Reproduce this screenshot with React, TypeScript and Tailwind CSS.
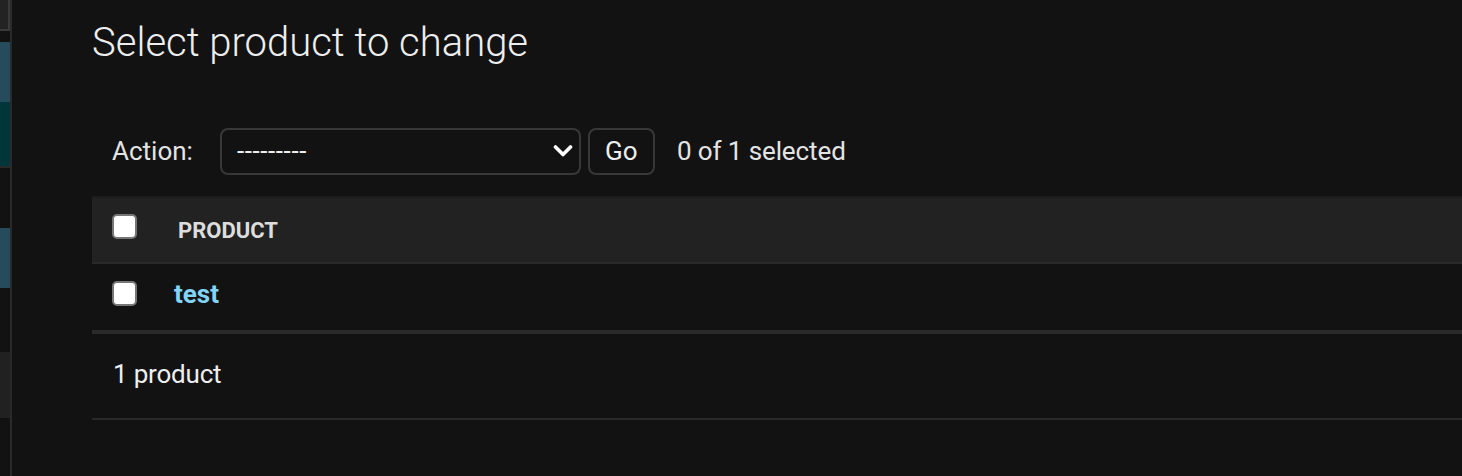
import React from 'react';

const Checkbox: React.FC<{ className?: string }> = ({ className = '' }) => (
  <span
    className={`block w-[25px] h-[25px] shrink-0 rounded-[5px] border-2 border-[#767676] bg-white ${className}`}
  />
);

const Sidebar: React.FC = () => (
  <div className="flex w-[12px] shrink-0 flex-col border-r-2 border-[#2a2a2a]">
    <div className="h-[31px] border-r-2 border-b-2 border-[#3a3a3a] bg-[#232323]" />
    <div className="h-[11px]" />
    <div className="h-[60px] bg-[#264b5d]" />
    <div className="h-[64px] bg-[#00363a]" />
    <div className="h-[2px] bg-[#2a2a2a]" />
    <div className="h-[60px]" />
    <div className="h-[60px] bg-[#264b5d]" />
    <div className="h-[64px]" />
    <div className="h-[66px] bg-[#212121]" />
    <div className="flex-1" />
  </div>
);

const App: React.FC = () => {
  return (
    <div className="flex h-[476px] w-[1462px] overflow-hidden bg-[#121212] font-['Roboto','Liberation_Sans',sans-serif] text-[#eeeeee]">
      <Sidebar />

      <main className="min-w-0 flex-1 pl-[80px] pt-[19px]">
        <h1 className="mb-[40px] text-[40px] leading-[48px] font-light text-[#eeeeee]">
          Select product to change
        </h1>

        {/* actions */}
        <div className="flex h-[89px] items-center px-[20px] text-[26px] text-[#e4e4e4]">
          <span>Action:</span>
          <div className="ml-[27px] flex h-[47px] w-[361px] items-center justify-between rounded-[8px] border-2 border-[#383838] bg-[#121212] pl-[15px] pr-[6px]">
            <span className="tracking-[0.6px] text-[#eeeeee]">---------</span>
            <svg width="20" height="12" viewBox="0 0 20 12" className="mb-[2px]">
              <polyline
                points="2.5,2 10,9.5 17.5,2"
                fill="none"
                stroke="#ffffff"
                strokeWidth="3.6"
                strokeLinecap="round"
                strokeLinejoin="round"
              />
            </svg>
          </div>
          <button className="ml-[7px] flex h-[47px] w-[67px] items-center justify-center rounded-[8px] border-2 border-[#383838] bg-[#121212] text-[#eeeeee]">
            Go
          </button>
          <span className="ml-[22px] tracking-[-0.1px]">0 of 1 selected</span>
        </div>

        {/* table */}
        <div className="flex h-[68px] items-center border-t-2 border-b-2 border-t-[#1c1c1c] border-b-[#2a2a2a] bg-[#222222] pl-[20px]">
          <Checkbox className="mb-[7px]" />
          <span className="ml-[41px] text-[22px] font-bold text-[#dddddd]">PRODUCT</span>
        </div>
        <div className="flex h-[68px] items-center border-b-2 border-[#2a2a2a] pl-[20px]">
          <Checkbox className="mb-[8px]" />
          <a className="ml-[37px] mb-[5px] text-[26px] font-bold text-[#81d4fa]">test</a>
        </div>

        {/* paginator */}
        <div className="flex h-[88px] items-center border-t-2 border-b-2 border-[#2a2a2a] pl-[21px] text-[26px]">
          <span className="mb-[3px] tracking-[-0.2px]">1 product</span>
        </div>
      </main>
    </div>
  );
};

export default App;
